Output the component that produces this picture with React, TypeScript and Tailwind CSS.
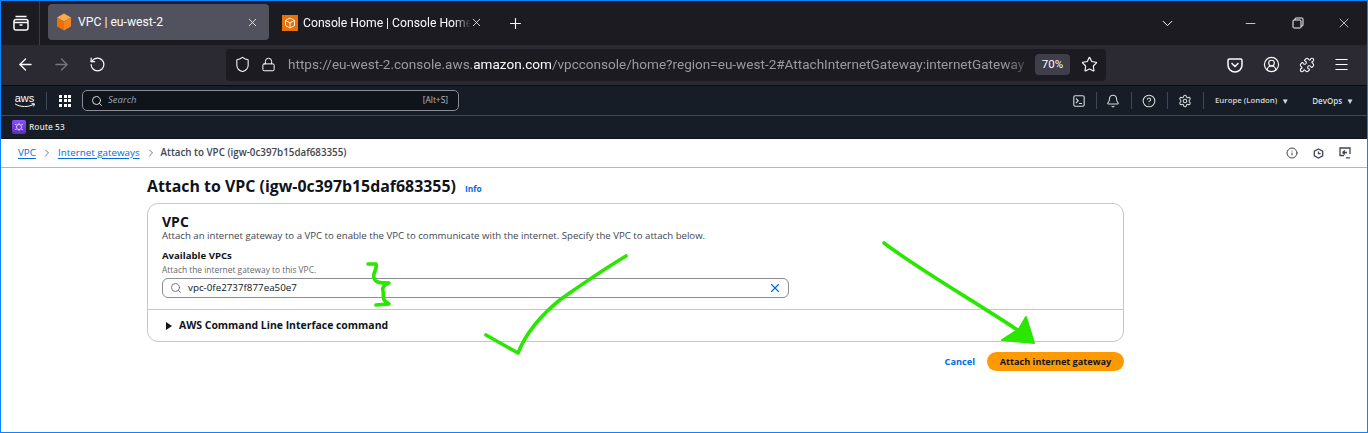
import {
  ArrowLeft,
  ArrowRight,
  Bell,
  ChevronDown,
  ChevronRight,
  CircleHelp,
  CircleUserRound,
  Info,
  Lock,
  Menu,
  Minus,
  Plus,
  Puzzle,
  RotateCw,
  Search,
  Settings,
  Shield,
  Star,
  X,
} from "lucide-react";

const UI_FONT = "font-['Roboto',sans-serif]";
const AWS_FONT = "font-['Open_Sans',sans-serif]";

function OrangeCube() {
  return (
    <svg width="16" height="18" viewBox="0 0 16 18">
      <path d="M8 0.5 15 4.5 8 8.5 1 4.5Z" fill="#ffa94d" />
      <path d="M1 4.5 8 8.5V17.5L1 13.5Z" fill="#e8710a" />
      <path d="M15 4.5 8 8.5V17.5L15 13.5Z" fill="#f58220" />
    </svg>
  );
}

function ConsoleIcon() {
  return (
    <div className="w-4 h-4 bg-[#e8710a] flex items-center justify-center">
      <svg width="12" height="12" viewBox="0 0 12 12" fill="none" stroke="#fff" strokeWidth="0.9">
        <path d="M6 1 10.5 3.4V8.6L6 11 1.5 8.6V3.4Z" />
        <path d="M1.5 3.4 6 5.9 10.5 3.4M6 5.9V11" />
      </svg>
    </div>
  );
}

function TabsIcon() {
  return (
    <svg width="18" height="18" viewBox="0 0 18 18" fill="none" stroke="#fbfbfe" strokeWidth="1.5">
      <rect x="2" y="5.5" width="14" height="10.5" rx="2" />
      <path d="M3.5 2.5h11M2 8.5h14M7.5 11h3" />
    </svg>
  );
}

function RestoreIcon() {
  return (
    <svg width="12" height="12" viewBox="0 0 12 12" fill="none" stroke="#fbfbfe" strokeWidth="1">
      <rect x="1" y="3" width="8" height="8" rx="1" />
      <path d="M3 3V2a1 1 0 0 1 1-1h6a1 1 0 0 1 1 1v6a1 1 0 0 1-1 1H9" />
    </svg>
  );
}

function PocketIcon() {
  return (
    <svg width="16" height="16" viewBox="0 0 16 16" fill="none" stroke="#fbfbfe" strokeWidth="1.5" strokeLinecap="round" strokeLinejoin="round">
      <path d="M2.5 2h11A1.5 1.5 0 0 1 15 3.5V8A7 7 0 0 1 1 8V3.5A1.5 1.5 0 0 1 2.5 2Z" />
      <path d="M5 6.5 8 9.5 11 6.5" />
    </svg>
  );
}

function CloudShellIcon() {
  return (
    <svg width="12" height="12" viewBox="0 0 12 12" fill="none" stroke="#d5dbdb" strokeWidth="1.1">
      <rect x="0.8" y="0.8" width="10.4" height="10.4" rx="1.4" />
      <path d="M3 3.5 5.2 5.7 3 8M6 8.5h3" />
    </svg>
  );
}

function Hexagon() {
  return (
    <svg width="11" height="11" viewBox="0 0 11 11" fill="none" stroke="#424650" strokeWidth="1.3">
      <path d="M5.5 1 9.7 3.2V7.8L5.5 10 1.3 7.8V3.2Z" />
      <path d="M5.5 3.5V5.7H7.6" />
    </svg>
  );
}

function FeedbackIcon() {
  return (
    <svg width="12" height="12" viewBox="0 0 12 12" fill="none" stroke="#424650" strokeWidth="1.3">
      <path d="M5 8.5H1V1h10v6" />
      <path d="M3.5 5.5 6 3.5M3.5 5.5 6 7.5M3.5 5.5H8M7 10.8h4" />
    </svg>
  );
}

function Route53Icon() {
  return (
    <div className="w-[14px] h-[14px] rounded-[2px] bg-gradient-to-b from-[#8c4fff] to-[#5a30b5] flex items-center justify-center">
      <svg width="10" height="10" viewBox="0 0 10 10" fill="none" stroke="#e9defc" strokeWidth="0.8">
        <circle cx="5" cy="5" r="2.6" />
        <path d="M1 2.5h1.5M7.5 2.5H9M1 7.5h1.5M7.5 7.5H9M5 1v1.4M5 7.6V9" />
      </svg>
    </div>
  );
}

function BrowserTab() {
  return (
    <div className="h-11 flex items-center bg-[#1c1b22]">
      <div className="w-[38px] flex justify-center pl-[2px]">
        <TabsIcon />
      </div>
      <div className="w-px h-11 bg-[#3c3b43]" />
      <div className="ml-2 w-[221px] h-9 rounded bg-[#52525e] flex items-center pl-[8px] pr-[10px] mb-[5px] mt-[3px]">
        <OrangeCube />
        <span className="ml-[6px] text-[12.2px] text-[#fbfbfe]">VPC | eu-west-2</span>
        <X size={13} strokeWidth={1.5} className="ml-auto text-[#fbfbfe]" />
      </div>
      <div className="ml-[13px] w-[203px] flex items-center">
        <ConsoleIcon />
        <span className="ml-[5px] w-[168px] overflow-hidden whitespace-nowrap text-[12.2px] text-[#fbfbfe] [mask-image:linear-gradient(to_right,black_90%,transparent)]">
          Console Home | Console Home
        </span>
        <X size={13} strokeWidth={1.5} className="-ml-[1px] text-[#fbfbfe]" />
      </div>
      <Plus size={17} strokeWidth={1.6} className="ml-[22px] text-[#fbfbfe]" />
      <ChevronDown size={17} strokeWidth={1.4} className="ml-[635px] text-[#fbfbfe]" />
      <Minus size={15} strokeWidth={1.2} className="ml-[67px] text-[#fbfbfe]" />
      <div className="ml-[34px]">
        <RestoreIcon />
      </div>
      <X size={16} strokeWidth={1.1} className="ml-[32px] text-[#fbfbfe]" />
    </div>
  );
}

function AddressBar() {
  return (
    <div className="h-[41px] pb-px bg-[#2b2a33] flex items-center border-b border-[#0c0c0d]">
      <ArrowLeft size={19} strokeWidth={1.7} className="ml-[15px] text-[#fbfbfe]" />
      <ArrowRight size={19} strokeWidth={1.7} className="ml-[17px] text-[#77767d]" />
      <RotateCw size={17} strokeWidth={1.7} className="ml-[18px] -scale-y-100 rotate-180 text-[#fbfbfe]" />
      <div className="ml-[120px] w-[880px] h-8 bg-[#1c1b22] rounded flex items-center pl-2">
        <Shield size={17} strokeWidth={1.5} className="text-[#fbfbfe]" />
        <Lock size={15} strokeWidth={1.6} className="ml-[10px] text-[#fbfbfe]" />
        <div className="ml-[12px] w-[747px] overflow-hidden whitespace-nowrap text-[13.55px] text-[#9b9aa1] [mask-image:linear-gradient(to_right,black_96%,transparent)]">
          https://eu-west-2.console.aws.<span className="text-[#fbfbfe]">amazon.com</span>
          /vpcconsole/home?region=eu-west-2#AttachInternetGateway:internetGateway
        </div>
        <div className="w-[35px] h-[21px] rounded bg-[#3f3e49] flex items-center justify-center text-[11.5px] text-[#fbfbfe]">
          70%
        </div>
        <Star size={17} strokeWidth={1.6} className="ml-[11px] text-[#fbfbfe]" />
      </div>
      <div className="ml-[121px]">
        <PocketIcon />
      </div>
      <CircleUserRound size={17} strokeWidth={1.6} className="ml-[20px] text-[#fbfbfe]" />
      <Puzzle size={16} strokeWidth={1.6} className="ml-[19px] text-[#fbfbfe]" />
      <Menu size={17} strokeWidth={1.5} className="ml-[18px] text-[#fbfbfe]" />
    </div>
  );
}

function AwsNav() {
  return (
    <div className={`${AWS_FONT} bg-[#161d26] text-[#d5dbdb]`}>
      <div className="h-[30px] flex items-center border-b border-[#414750]">
        <div className="ml-3 w-[23px] flex flex-col items-center">
          <span className="text-[11px] leading-[9px] text-white font-['Liberation_Sans',sans-serif]">aws</span>
          <svg width="22" height="5" viewBox="0 0 22 5" fill="none" stroke="#fff" strokeWidth="1">
            <path d="M1 0.8C6 4.4 15 4.4 20 1M17.5 0.7 20.5 0.8 19.6 3.4" />
          </svg>
        </div>
        <div className="ml-[10px] w-px h-[18px] bg-[#414750]" />
        <div className="ml-3 grid grid-cols-3 gap-[1.5px]">
          {Array.from({ length: 9 }).map((_, i) => (
            <span key={i} className="w-[3px] h-[3px] bg-white" />
          ))}
        </div>
        <div className="ml-[11px] w-[377px] h-[21px] rounded-[5px] border border-[#8c8c94] bg-[#0f141a] flex items-center pl-2 pr-2">
          <Search size={12} strokeWidth={2} className="text-[#d5dbdb]" />
          <span className="ml-[5px] text-[9.5px] italic text-[#9ba7b6]">Search</span>
          <span className="ml-auto mr-[2px] text-[8.4px] text-[#b6bec9]">[Alt+S]</span>
        </div>
        <div className="ml-[614px]">
          <CloudShellIcon />
        </div>
        <div className="ml-[11px] w-px h-[17px] bg-[#414750]" />
        <Bell size={14} strokeWidth={1.8} className="ml-[9px]" />
        <div className="ml-[11px] w-px h-[17px] bg-[#414750]" />
        <CircleHelp size={14} strokeWidth={1.8} className="ml-[10px]" />
        <div className="ml-[11px] w-px h-[17px] bg-[#414750]" />
        <Settings size={14} strokeWidth={1.8} className="ml-[10px]" />
        <div className="ml-[11px] w-px h-[17px] bg-[#414750]" />
        <span className="ml-[11px] text-[7.8px] font-semibold whitespace-nowrap">Europe (London)</span>
        <span className="ml-[4px] text-[8px]">▼</span>
        <span className="ml-[23px] text-[8px] font-semibold">DevOps</span>
        <span className="ml-[4px] text-[8px]">▼</span>
      </div>
      <div className="h-[23px] flex items-center pl-[11px] border-b border-[#0f141a]">
        <Route53Icon />
        <span className="ml-[3px] text-[8.4px] font-semibold">Route 53</span>
      </div>
    </div>
  );
}

function Breadcrumbs() {
  return (
    <div className="h-[29px] flex items-center pl-[17px] pr-[16px] border-b border-[#b4b4bb] text-[9.8px]">
      <a className="text-[#006ce0] underline underline-offset-2">VPC</a>
      <ChevronRight size={12} strokeWidth={1.8} className="mx-[5px] text-[#656871]" />
      <a className="text-[#006ce0] underline underline-offset-2">Internet gateways</a>
      <ChevronRight size={12} strokeWidth={1.8} className="ml-[5px] mr-[4px] text-[#656871]" />
      <span className="font-semibold text-[#424650]">Attach to VPC (igw-0c397b15daf683355)</span>
      <div className="ml-auto flex items-center gap-[15px] text-[#424650]">
        <Info size={12} strokeWidth={2} />
        <Hexagon />
        <FeedbackIcon />
      </div>
    </div>
  );
}

function AttachForm() {
  return (
    <div className="ml-[146px] w-[977px]">
      <div className="h-[35px] flex items-end pb-[6px]">
        <h1 className="text-[15.9px] leading-[22px] font-bold text-[#0f141a]">
          Attach to VPC (igw-0c397b15daf683355)
        </h1>
        <a className="ml-[9px] mb-[1px] text-[8.4px] font-bold text-[#006ce0]">Info</a>
      </div>
      <div className="h-[139px] rounded-[11px] border border-[#c6c6cd] bg-white">
        <div className="h-[105px] pl-[14px] pr-[334px] pt-[10px]">
          <h2 className="text-[14px] leading-[16px] font-bold text-[#0f141a]">VPC</h2>
          <p className="text-[9.63px] leading-[12px] whitespace-nowrap text-[#424650]">
            Attach an internet gateway to a VPC to enable the VPC to communicate with the internet. Specify the VPC to attach below.
          </p>
          <div className="mt-[8px] text-[9.6px] leading-[12px] font-bold text-[#0f141a]">Available VPCs</div>
          <div className="mt-[3px] text-[8.4px] leading-[10px] text-[#656871]">Attach the internet gateway to this VPC.</div>
          <div className="mt-[3px] h-[20px] rounded-[6px] border border-[#8c8c94] flex items-center pl-[7px] pr-[6px]">
            <Search size={12} strokeWidth={1.8} className="text-[#656871]" />
            <span className="ml-[6px] text-[9.8px] text-[#0f141a]">vpc-0fe2737f877ea50e7</span>
            <X size={14} strokeWidth={2} className="ml-auto text-[#006ce0]" />
          </div>
        </div>
        <div className="h-[32px] border-t border-[#c6c6cd] flex items-center pl-[18px]">
          <span className="w-0 h-0 border-y-[4px] border-y-transparent border-l-[6px] border-l-[#0f141a]" />
          <span className="ml-[7px] text-[10.45px] font-bold text-[#0f141a]">AWS Command Line Interface command</span>
        </div>
      </div>
      <div className="mt-[10px] flex items-center justify-end">
        <a className="text-[9.2px] font-bold text-[#006ce0]">Cancel</a>
        <button className="ml-[12px] w-[137px] h-[19px] rounded-full bg-[#ff9900] text-[9.15px] font-bold text-[#0f141a]">
          Attach internet gateway
        </button>
      </div>
    </div>
  );
}

// hand-drawn marks from the screenshot, sitting on top of the page
function Annotations() {
  return (
    <svg className="absolute left-0 top-0 pointer-events-none" width="1368" height="433" fill="none" stroke="#2ae600" strokeLinecap="round" strokeLinejoin="round">
      <path strokeWidth="3.6" d="M625 255C600 270 580 284 560 298C540 314 525 332 517 352L485 334" />
      <path strokeWidth="3.6" d="M367 263L375 263C377 268 371 272 373 277C374 282 380 282 388 282C382 284 381 288 382 290C383 294 381 298 384 300L388 303L375 304" />
      <path strokeWidth="3.6" d="M883 242C920 270 970 298 1018 330" />
      <path strokeWidth="2" fill="#2ae600" d="M1025 316L1033 342L1001 339L1018 328Z" />
    </svg>
  );
}

export default function App() {
  return (
    <div className={`${UI_FONT} relative w-[1368px] h-[433px] overflow-hidden bg-white border border-[#0a84ff]`}>
      <BrowserTab />
      <AddressBar />
      <AwsNav />
      <div className={AWS_FONT}>
        <Breadcrumbs />
        <AttachForm />
      </div>
      <Annotations />
    </div>
  );
}
